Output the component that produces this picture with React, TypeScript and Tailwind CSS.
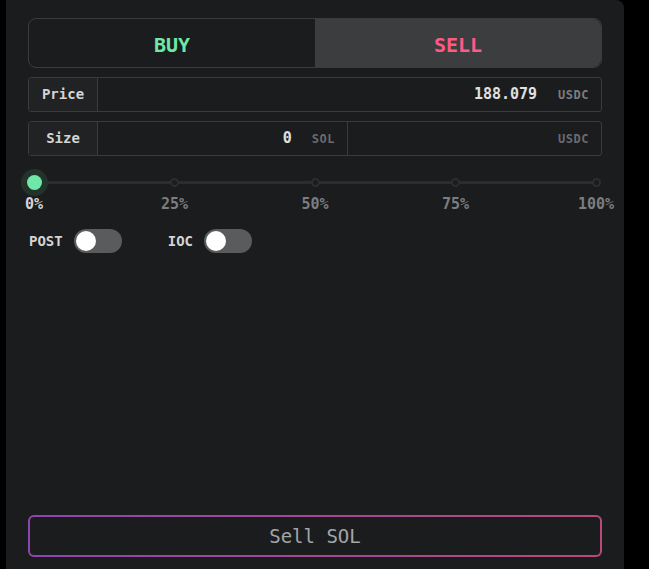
import { useState } from 'react';

const marks = ['0%', '25%', '50%', '75%', '100%'];

function Toggle({ label }: { label: string }) {
  const [on, setOn] = useState(false);
  return (
    <div className="flex items-center gap-[11px]">
      <span className="text-[14px] font-bold text-[#d4d4d4]">{label}</span>
      <button
        onClick={() => setOn(!on)}
        className="flex h-[24px] w-[48px] items-center rounded-full bg-[#5a5b5d] px-[2px]"
      >
        <span className={`h-[20px] w-[20px] rounded-full bg-white ${on ? 'ml-[24px]' : ''}`} />
      </button>
    </div>
  );
}

export default function App() {
  const [side, setSide] = useState<'buy' | 'sell'>('sell');

  return (
    <div className="h-[569px] w-[649px] overflow-hidden bg-black font-['DejaVu_Sans_Mono',monospace]">
      <div className="ml-[6px] flex h-[569px] w-[618px] flex-col rounded-tr-lg bg-[#1b1c1e] px-[22px] pt-[18px]">
        <div className="flex h-[50px] rounded-lg border border-[#3a3b3d]">
          <button
            onClick={() => setSide('buy')}
            className={`flex-1 rounded-l-lg pt-[3px] text-[20px] font-bold text-[#6ee7a8] ${side === 'buy' ? 'bg-[#3c3d3f]' : ''}`}
          >
            BUY
          </button>
          <button
            onClick={() => setSide('sell')}
            className={`flex-1 rounded-r-lg pt-[3px] text-[20px] font-bold text-[#ff5a87] ${side === 'sell' ? 'bg-[#3c3d3f]' : ''}`}
          >
            SELL
          </button>
        </div>

        <div className="mt-[9px] flex h-[35px] rounded-[3px] border border-[#3a3b3d]">
          <div className="flex w-[69px] items-center justify-center border-r border-[#3a3b3d] bg-[#212224] text-[14px] font-bold text-[#d4d4d4]">
            Price
          </div>
          <div className="flex flex-1 items-center justify-end pr-[12px]">
            <span className="text-[15px] font-bold text-[#e0e0e0]">188.079</span>
            <span className="ml-[21px] text-[12px] font-bold tracking-[0.5px] text-[#7c7d80]">USDC</span>
          </div>
        </div>

        <div className="mt-[9px] flex h-[35px] rounded-[3px] border border-[#3a3b3d]">
          <div className="flex w-[69px] items-center justify-center border-r border-[#3a3b3d] bg-[#212224] text-[14px] font-bold text-[#d4d4d4]">
            Size
          </div>
          <div className="flex w-[250px] items-center justify-end border-r border-[#3a3b3d] pr-[12px]">
            <span className="text-[15px] font-bold text-[#e0e0e0]">0</span>
            <span className="ml-[20px] text-[12px] font-bold tracking-[0.5px] text-[#6a6b6e]">SOL</span>
          </div>
          <div className="flex flex-1 items-center justify-end pr-[12px]">
            <span className="text-[12px] font-bold tracking-[0.5px] text-[#6a6b6e]">USDC</span>
          </div>
        </div>

        <div className="relative mt-[15px] h-[22px]">
          <div className="absolute left-[6px] right-[4px] top-[10px] h-[3px] bg-[#2c2d2f]" />
          {marks.map((m, i) => (
            <div
              key={m}
              className="absolute top-[7px] h-[9px] w-[9px] rounded-full border-2 border-[#2c2d2f] bg-[#1b1c1e]"
              style={{ left: 6 + i * 140.5 - 4.5 }}
            />
          ))}
          <div className="absolute left-[-7px] top-[-2px] flex h-[27px] w-[27px] items-center justify-center rounded-full bg-[#243329]">
            <div className="h-[15px] w-[15px] rounded-full bg-[#6ee7a8]" />
          </div>
        </div>
        <div className="relative h-[22px]">
          <div className="absolute left-0 top-0 text-[15px] font-bold text-[#d4d4d4]" style={{ left: -3 }}>
            0%
          </div>
          {marks.slice(1).map((m, i) => (
            <span
              key={m}
              className="absolute top-0 -translate-x-1/2 text-[15px] font-bold text-[#7c7d80]"
              style={{ left: 6 + (i + 1) * 140.5 }}
            >
              {m}
            </span>
          ))}
        </div>

        <div className="mt-[14px] flex items-center gap-[46px] pl-[1px]">
          <Toggle label="POST" />
          <Toggle label="IOC" />
        </div>

        <div className="flex-1" />

        <div className="mb-[12px] rounded-md bg-gradient-to-r from-[#8e44ad] to-[#b8497a] p-[2px]">
          <button className="flex h-[38px] w-full items-center justify-center rounded-[4px] bg-[#1b1c1e] text-[19px] text-[#a4a5a8]">
            Sell SOL
          </button>
        </div>
      </div>
    </div>
  );
}
